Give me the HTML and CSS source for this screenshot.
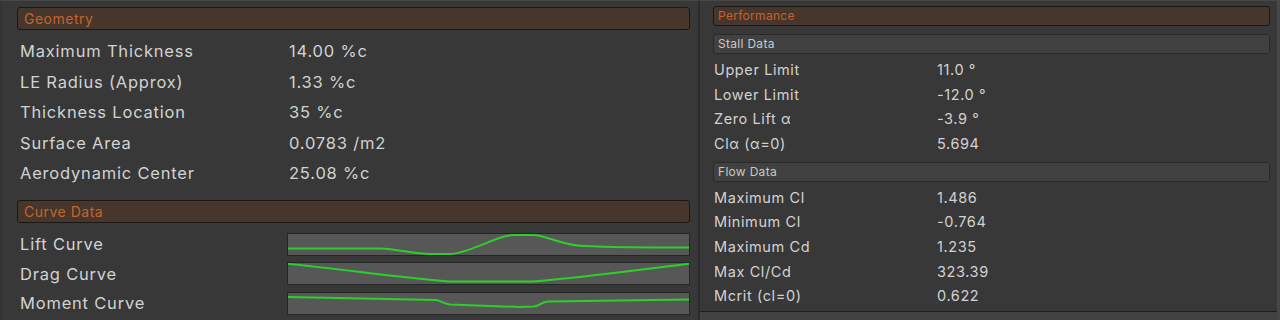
FILE: index.html
```html
<!DOCTYPE html>
<html lang="en">
<head>
    <meta charset="UTF-8">
    <meta name="viewport" content="width=device-width, initial-scale=1.0">
    <title>Airfoil Properties</title>
    <link rel="stylesheet" href="styles.css">
</head>
<body>

    <div class="page">

        <div class="panel-left">
            <div class="header">Geometry</div>
            <div class="rows">
                <div class="row"><span>Maximum Thickness</span><span>14.00 %c</span></div>
                <div class="row"><span>LE Radius (Approx)</span><span>1.33 %c</span></div>
                <div class="row"><span>Thickness Location</span><span>35 %c</span></div>
                <div class="row"><span>Surface Area</span><span>0.0783 /m2</span></div>
                <div class="row"><span>Aerodynamic Center</span><span>25.08 %c</span></div>
            </div>

            <div class="header header-curves">Curve Data</div>
            <div class="curves">
                <div class="curve-row">
                    <span>Lift Curve</span>
                    <div class="curve-box">
                        <svg viewBox="0 0 401 21" preserveAspectRatio="none">
                            <path d="M0 14.5 L92 14.5 C110 15 125 20 142 20 L162 20 C180 20 210 1 225 1 L245 1 C258 1 272 11 295 12 C330 13.5 370 13.5 401 13.5"/>
                        </svg>
                    </div>
                </div>
                <div class="curve-row">
                    <span>Drag Curve</span>
                    <div class="curve-box">
                        <svg viewBox="0 0 401 21" preserveAspectRatio="none">
                            <path d="M0 0.8 C60 7 110 14 160 18.5 L245 18.5 C290 15 350 7 401 0.8"/>
                        </svg>
                    </div>
                </div>
                <div class="curve-row">
                    <span>Moment Curve</span>
                    <div class="curve-box">
                        <svg viewBox="0 0 401 21" preserveAspectRatio="none">
                            <path d="M0 4 L148 7 C153 7.5 155 11 162 11.5 L232 14 L246 13.5 C252 13 253 9 260 8.6 L401 6.6"/>
                        </svg>
                    </div>
                </div>
            </div>
        </div>

        <div class="panel-right">
            <div class="perf">
                <div class="header header-small">Performance</div>

                <div class="subheader">Stall Data</div>
                <div class="rows-small">
                    <div class="row-small"><span>Upper Limit</span><span>11.0 °</span></div>
                    <div class="row-small"><span>Lower Limit</span><span>-12.0 °</span></div>
                    <div class="row-small"><span>Zero Lift α</span><span>-3.9 °</span></div>
                    <div class="row-small"><span>Clα (α=0)</span><span>5.694</span></div>
                </div>

                <div class="subheader subheader-flow">Flow Data</div>
                <div class="rows-small">
                    <div class="row-small"><span>Maximum Cl</span><span>1.486</span></div>
                    <div class="row-small"><span>Minimum Cl</span><span>-0.764</span></div>
                    <div class="row-small"><span>Maximum Cd</span><span>1.235</span></div>
                    <div class="row-small"><span>Max Cl/Cd</span><span>323.39</span></div>
                    <div class="row-small"><span>Mcrit (cl=0)</span><span>0.622</span></div>
                </div>
            </div>
            <div class="below"></div>
        </div>

    </div>

</body>
</html>
```

FILE: styles.css
```css
body {
    margin: 0;
    background-color: #383838;
    font-family: Inter, "Noto Sans", sans-serif;
    color: #d2d2d2;
    overflow: hidden;
}

.page {
    display: flex;
    height: 320px;
    border-top: 1px solid #474747;
    box-sizing: border-box;
}

/* left column */

.panel-left {
    width: 700px;
    box-sizing: border-box;
    padding: 6px 8px 0 15px;
    border-right: 2px solid #2b2b2b;
    border-left: 2px solid #333333;
}

.header {
    height: 23px;
    box-sizing: border-box;
    background-color: #46362b;
    border: 1px solid #1d1713;
    border-radius: 3px;
    color: #c4642c;
    font-size: 14px;
    line-height: 21px;
    letter-spacing: 0.5px;
    padding-left: 6px;
}

.rows {
    margin-top: 6px;
}

.row {
    display: grid;
    grid-template-columns: 269px 1fr;
    height: 30.5px;
    align-items: center;
    padding-left: 3px;
    font-size: 16.5px;
    letter-spacing: 0.8px;
}

.header-curves {
    margin-top: 11px;
}

.curves {
    margin-top: 7px;
}

.curve-row {
    display: flex;
    align-items: center;
    height: 29.5px;
    padding-left: 3px;
    font-size: 16.5px;
    letter-spacing: 0.8px;
}

.curve-row span {
    width: 267px;
    flex-shrink: 0;
}

.curve-box {
    flex: 1;
    height: 23px;
    box-sizing: border-box;
    background-color: #575757;
    border: 1px solid #252525;
}

.curve-box svg {
    display: block;
    width: 100%;
    height: 100%;
}

.curve-box path {
    fill: none;
    stroke: #2bd02b;
    stroke-width: 2;
    vector-effect: non-scaling-stroke;
}

/* right column */

.panel-right {
    flex: 1;
    display: flex;
    flex-direction: column;
    border-right: 3px solid #474747;
}

.perf {
    height: 311px;
    box-sizing: border-box;
    padding: 5px 7px 0 13px;
    border-bottom: 1px solid #1f1f1f;
}

.below {
    flex: 1;
    background-color: #424242;
}

.header-small {
    height: 20px;
    font-size: 12px;
    line-height: 18px;
    letter-spacing: 0.3px;
    padding-left: 4px;
}

.subheader {
    margin-top: 8px;
    height: 20px;
    box-sizing: border-box;
    background-color: #414141;
    border: 1px solid #2a2a2a;
    border-radius: 3px;
    color: #c8c8c8;
    font-size: 12px;
    line-height: 18px;
    letter-spacing: 0.3px;
    padding-left: 4px;
}

.subheader-flow {
    margin-top: 6px;
}

.rows-small {
    margin-top: 3px;
}

.row-small {
    display: grid;
    grid-template-columns: 223px 1fr;
    height: 24.7px;
    align-items: center;
    padding-left: 1px;
    font-size: 14.5px;
    letter-spacing: 0.6px;
}
```
